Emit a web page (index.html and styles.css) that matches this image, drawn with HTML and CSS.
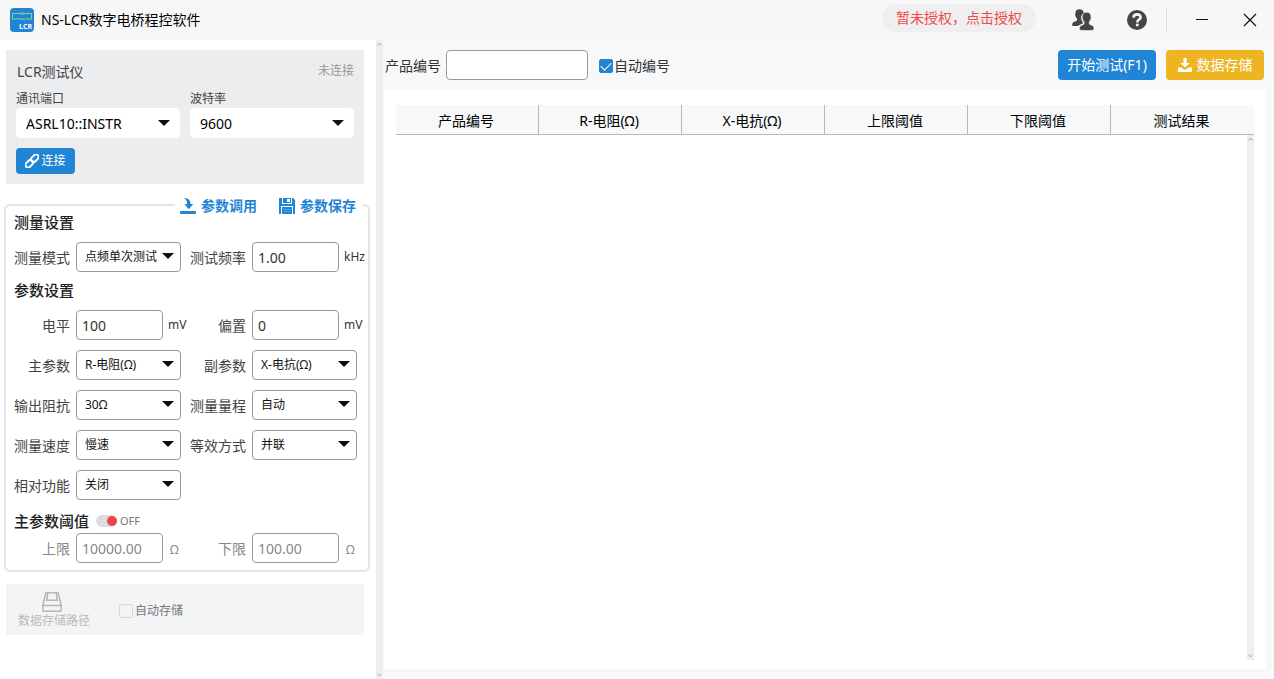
FILE: index.html
```html
<!DOCTYPE html>
<html lang="zh-CN">
<head>
<meta charset="utf-8">
<title>NS-LCR数字电桥程控软件</title>
<link rel="stylesheet" href="styles.css">
</head>
<body>
<header class="titlebar">
  <svg class="logo" viewBox="0 0 24 24" width="24" height="24" aria-hidden="true">
    <rect width="24" height="24" rx="4" fill="#1f85d4"/>
    <path d="M2.5 11.500V5.500H11M13 5.500h8.500v5.500h-2.500M11 4v3M13 4v3M2.500 11h4l1-1 1 1.500 1-1.500 1 1.500 1-1.500 1 1.500h2M15 11.500c.5-1.500 1.500-1.500 2 0 .5-1.500 1.500-1.500 2 0" fill="none" stroke="#8fcf82" stroke-width="1"/>
    <text x="9" y="20.500" class="logo-text">LCR</text>
  </svg>
  <h1 class="app-title">NS-LCR数字电桥程控软件</h1>
  <button class="license" type="button">暂未授权，点击授权</button>
  <div class="title-tools">
    <button class="icon-btn" type="button" aria-label="用户">
      <svg viewBox="0 0 22 22" width="22" height="22"><path fill="#454545" d="M7.500.2c3 0 4.300 1.600 4.300 4.300C9.500 5.500 8.800 7.500 9.300 10.200c.3 1.300.8 2.200 1.500 3v1.300c-2 .9-3.900 1.300-4.700 2.500H.3c-.3-3 .7-3.700 2.500-4.400 1.700-.6 2.300-.9 2.300-1.900v-.9C4 8.800 3.700 7.700 3.500 6.700c-.6-.6-.6-1.500-.1-2C3.200 2 4.400.2 7.500.2z"/><path fill="#454545" stroke="#f7f7f7" stroke-width=".6" d="M14.600 3.200c3.200 0 4.600 1.900 4.300 4.700.5.600.4 1.500-.2 2-.2 1.200-.7 2.300-1.500 3v1.500c.2 1 1 1.300 2.300 1.800 1.900.7 2.600 1.500 2.500 4.500-1.500.6-4 .9-7.300.9s-5.800-.3-7.400-.9c0-3 .7-3.800 2.500-4.500 1.400-.5 2.100-.8 2.300-1.800v-1.500c-.8-.7-1.300-1.800-1.500-3-.6-.5-.7-1.400-.2-2-.3-2.800 1.100-4.700 4.200-4.700z"/></svg>
    </button>
    <button class="icon-btn" type="button" aria-label="帮助">
      <svg viewBox="0 0 20 20" width="20" height="20"><circle cx="10" cy="10" r="10" fill="#454545"/><path d="M6.500 7.600C6.700 3.300 13.700 3.400 13.600 7.400c-.1 2.200-3.300 2.300-3.300 5" fill="none" stroke="#f7f7f7" stroke-width="2.600"/><rect x="8.900" y="13.700" width="2.700" height="2.600" fill="#f7f7f7"/></svg>
    </button>
  </div>
  <div class="window-tools">
    <button class="icon-btn" type="button" aria-label="最小化">
      <svg viewBox="0 0 14 14" width="14" height="14"><path d="M1 6.500h12" stroke="#111"/></svg>
    </button>
    <button class="icon-btn" type="button" aria-label="关闭窗口">
      <svg viewBox="0 0 14 14" width="14" height="14"><path d="M1 1l12 12M13 1L1 13" stroke="#111" stroke-width="1.200"/></svg>
    </button>
  </div>
</header>

<div class="workspace">
  <aside class="sidebar">
    <section class="device">
      <div class="device-head"><h2 class="device-name">LCR测试仪</h2><span class="status">未连接</span></div>
      <div class="device-ports">
        <div class="port">
          <label class="port-label" for="port">通讯端口</label>
          <span class="combo combo-flat"><select id="port"><option>ASRL10::INSTR</option></select></span>
        </div>
        <div class="port">
          <label class="port-label" for="baud">波特率</label>
          <span class="combo combo-flat"><select id="baud"><option>9600</option></select></span>
        </div>
      </div>
      <button class="btn btn-connect" type="button">
        <svg viewBox="0 0 14 14" width="14" height="14"><g fill="none" stroke="#fff" stroke-width="2" transform="rotate(-45 7 7)"><rect x="-1.200" y="4.400" width="8.600" height="5.200" rx="2.600"/><rect x="6.600" y="4.400" width="8.600" height="5.200" rx="2.600"/></g></svg>
        连接
      </button>
    </section>

    <fieldset class="settings">
      <legend class="actions">
        <button class="link-btn" type="button">
          <svg viewBox="0 0 16 16" width="16" height="16"><path fill="#1f85d4" d="M4 0c4 0 6.500 2 6.500 6h2.700L8.800 11.300 4.500 6h2.600C7.100 3 6 1 4 0zM.8 13h14.400a.8.8 0 0 1 .8.800V15.200a.8.800 0 0 1-.8.800H.8a.8.800 0 0 1-.8-.8V13.800A.8.800 0 0 1 .8 13z"/></svg>
          参数调用
        </button>
        <button class="link-btn" type="button">
          <svg viewBox="0 0 16 16" width="16" height="16"><path fill="#1f85d4" d="M0 0h3v6h10V0h1l2 2v14h-2V8H2v8H0zM4 0h4v5H4zM11 0h1v5h-1zM8 0h3v1H8zM8 4h3v1H8zM3 9h10v7H3z"/><path d="M4.500 11.500h7M4.500 13.500h7" stroke="#4fa0df"/></svg>
          参数保存
        </button>
      </legend>

      <h3 class="group-title">测量设置</h3>
      <div class="fields">
        <label for="mode">测量模式</label>
        <span class="combo"><select id="mode"><option>点频单次测试</option></select></span>
        <label for="freq">测试频率</label>
        <span class="measure"><input class="text" id="freq" type="text" value="1.00"><span class="unit">kHz</span></span>
      </div>

      <h3 class="group-title group-gap">参数设置</h3>
      <div class="fields">
        <label for="level">电平</label>
        <span class="measure"><input class="text" id="level" type="text" value="100"><span class="unit">mV</span></span>
        <label for="bias">偏置</label>
        <span class="measure"><input class="text" id="bias" type="text" value="0"><span class="unit">mV</span></span>

        <label for="main">主参数</label>
        <span class="combo"><select id="main"><option>R-电阻(Ω)</option></select></span>
        <label for="second">副参数</label>
        <span class="combo"><select id="second"><option>X-电抗(Ω)</option></select></span>

        <label for="imp">输出阻抗</label>
        <span class="combo"><select id="imp"><option>30Ω</option></select></span>
        <label for="range">测量量程</label>
        <span class="combo"><select id="range"><option>自动</option></select></span>

        <label for="speed">测量速度</label>
        <span class="combo"><select id="speed"><option>慢速</option></select></span>
        <label for="equiv">等效方式</label>
        <span class="combo"><select id="equiv"><option>并联</option></select></span>

        <label for="rel">相对功能</label>
        <span class="combo"><select id="rel"><option>关闭</option></select></span>
      </div>

      <div class="threshold-head">
        <h3 class="group-title">主参数阈值</h3>
        <label class="toggle"><input type="checkbox" class="toggle-input" aria-label="主参数阈值">OFF</label>
      </div>
      <div class="fields fields-off">
        <label for="upper">上限</label>
        <span class="measure"><input class="text" id="upper" type="text" value="10000.00" disabled><span class="unit">Ω</span></span>
        <label for="lower">下限</label>
        <span class="measure"><input class="text" id="lower" type="text" value="100.00" disabled><span class="unit">Ω</span></span>
      </div>
    </fieldset>

    <section class="storage">
      <button class="path-btn" type="button" disabled>
        <svg viewBox="0 0 20 20" width="20" height="20"><path d="M4 .8h12l3.200 12.500v5a1 1 0 0 1-1 1H1.800a1 1 0 0 1-1-1v-5zM.8 13.500h18.400M5.800 1L4.800 8.300h10.400L14.200 1" fill="none" stroke="#b4b6b8" stroke-width="1.500"/></svg>
        数据存储路径
      </button>
      <label class="check check-off"><input type="checkbox" disabled>自动存储</label>
    </section>
  </aside>

  <div class="track track-side">
    <svg viewBox="0 0 5 4" width="5" height="4"><path d="M.5 3.500l2-2.500 2 2.500" fill="none" stroke="#aaa"/></svg>
    <svg viewBox="0 0 5 4" width="5" height="4"><path d="M.5 .5l2 2.500 2-2.500" fill="none" stroke="#aaa"/></svg>
  </div>

  <main class="main">
    <div class="toolbar">
      <label for="product">产品编号</label>
      <input class="text product" id="product" type="text">
      <label class="check"><input type="checkbox" checked>自动编号</label>
      <div class="toolbar-actions">
        <button class="btn btn-start" type="button">开始测试(F1)</button>
        <button class="btn btn-save" type="button">
          <svg viewBox="0 0 14 14" width="14" height="14"><path fill="#fff" d="M5.500 0h3v5h3L7 9.500 2.500 5h3zM.6 9.500h3L5.500 11.500h3l1.900-2h3a.6.600 0 0 1 .6.600v3.300a.6.600 0 0 1-.6.600H.6a.6.600 0 0 1-.6-.6v-3.300a.6.600 0 0 1 .6-.6z"/></svg>
          数据存储
        </button>
      </div>
    </div>
    <section class="results">
      <table class="grid">
        <thead>
          <tr><th>产品编号</th><th>R-电阻(Ω)</th><th>X-电抗(Ω)</th><th>上限阈值</th><th>下限阈值</th><th>测试结果</th></tr>
        </thead>
      </table>
      <div class="grid-body">
        <div class="track">
          <svg viewBox="0 0 5 4" width="5" height="4"><path d="M.5 3.500l2-2.500 2 2.500" fill="none" stroke="#aaa"/></svg>
          <svg viewBox="0 0 5 4" width="5" height="4"><path d="M.5 .5l2 2.500 2-2.500" fill="none" stroke="#aaa"/></svg>
        </div>
      </div>
    </section>
  </main>
</div>
</body>
</html>
```
FILE: styles.css
```css
:root {
  --blue: #1f85d4;
  --line: #999;
  --ink: #333;
}

* { box-sizing: border-box; }

body {
  margin: 0;
  min-height: 100vh;
  display: flex;
  flex-direction: column;
  background: #fff;
  color: var(--ink);
  font: 14px/20px "Noto Sans", "Noto Sans CJK SC", sans-serif;
}

button, input, select { font: inherit; color: inherit; }
button { border: 0; padding: 0; background: none; }
h1, h2, h3 { margin: 0; font-size: 14px; font-weight: 400; }
svg { display: block; flex: none; }

/* Title bar */
.titlebar {
  display: flex;
  align-items: center;
  height: 40px;
  padding: 0 17px 0 10px;
  background: #f7f7f7;
}
.logo-text { font: 700 7px "Open Sans", sans-serif; fill: #fff; }
.app-title { margin-left: 7px; color: #000; }
.license {
  height: 28px;
  margin: 0 36px 4px auto;
  padding: 0 14px;
  border-radius: 14px;
  background: #efefef;
  color: #ee4a4a;
}
.title-tools { display: flex; align-items: center; gap: 33px; padding-right: 19px; }
.icon-btn { display: block; }
.window-tools {
  display: flex;
  align-items: center;
  gap: 34px;
  height: 24px;
  padding-left: 28px;
  border-left: 1px solid #e0e0e0;
}

.workspace { flex: 1; display: flex; }

/* Sidebar */
.sidebar { flex: none; width: 376px; padding: 10px 6px 10px 4px; }
.device {
  margin: 0 6px 0 2px;
  padding: 12px 10px 10px;
  background: #ecedef;
}
.device-head { display: flex; justify-content: space-between; padding-left: 1px; margin-bottom: 6px; }
.device-name { color: #444; }
.status { font-size: 12px; line-height: 18px; color: #999; }
.device-ports { display: grid; grid-template-columns: 1fr 1fr; gap: 10px; margin-bottom: 10px; }
.port-label { display: block; padding-top: 2px; font-size: 12px; line-height: 18px; color: #444; }

.combo { position: relative; display: block; width: 105px; }
.combo select {
  display: block;
  width: 100%;
  height: 30px;
  padding: 0 8px;
  border: 1px solid var(--line);
  border-radius: 4px;
  appearance: none;
  background: #fff;
  color: #111;
  font-size: 12px;
}
.combo::after {
  content: "";
  position: absolute;
  right: 7px;
  top: 11px;
  border: 6px solid transparent;
  border-top-color: #111;
  border-bottom: 0;
  pointer-events: none;
}
.combo-flat { width: auto; }
.combo-flat select { padding: 1px 9px 0; border-color: #fff; color: #000; font-size: 14px; }
.combo-flat::after { right: 10px; top: 12px; }

.btn {
  display: flex;
  align-items: center;
  justify-content: center;
  border-radius: 4px;
  color: #fff;
}
.btn-connect { width: 59px; height: 26px; gap: 2px; background: var(--blue); font-size: 12px; }

.settings {
  margin: 11px 0 0;
  padding: 0 0 7px 8px;
  border: 2px solid #e3e3e3;
  border-radius: 6px;
  min-width: 0;
}
.actions { display: flex; gap: 22px; margin: 0 5px 0 auto; padding: 0 7px 0 5px; }
.link-btn { display: flex; align-items: center; gap: 5px; height: 20px; padding-top: 2px; color: var(--blue); font-weight: 700; }
.group-title { font-size: 15px; line-height: 14px; font-weight: 500; color: #222; }
.group-gap { margin-top: 11px; }
.fields {
  display: grid;
  grid-template-columns: 56px 108px 56px 1fr;
  column-gap: 6px;
  row-gap: 10px;
  align-items: center;
  margin-top: 13px;
}
.fields label { padding-top: 1px; text-align: right; white-space: nowrap; color: #444; }
.measure { display: flex; align-items: center; gap: 5px; }
.text {
  width: 87px;
  height: 30px;
  padding: 0 5px;
  border: 1px solid var(--line);
  border-radius: 4px;
  background: #fff;
}
.unit { font-size: 12px; }
.threshold-head { display: flex; align-items: center; gap: 7px; margin-top: 13px; }
.fields-off { margin-top: 4px; }
.fields-off label, .fields-off .text, .fields-off .unit { color: #888; }
.fields-off .unit { padding: 4px 0 0 2px; }
.toggle { display: flex; align-items: center; gap: 3px; font-size: 11px; line-height: 16px; color: #777; }
.toggle-input {
  display: flex;
  justify-content: flex-end;
  width: 21px;
  height: 12px;
  margin: 0;
  border-radius: 6px;
  appearance: none;
  background: #dcdddf;
}
.toggle-input::before { content: ""; width: 10px; height: 10px; margin: 1px 0; border-radius: 50%; background: #ec4646; }

.storage {
  display: flex;
  align-items: center;
  gap: 29px;
  height: 51px;
  margin: 12px 6px 0 2px;
  padding: 3px 12px 0;
  background: #f3f4f6;
}
.path-btn { display: flex; flex-direction: column; align-items: center; font-size: 12px; line-height: 18px; color: #bbb; }
.path-btn svg { margin-right: 4px; }
.check { display: flex; align-items: center; gap: 1px; }
.check input {
  display: grid;
  place-items: center;
  width: 14px;
  height: 14px;
  margin: 0;
  border: 1px solid #d6d7d9;
  border-radius: 2px;
  appearance: none;
}
.check input:checked { border-color: var(--blue); background: var(--blue); }
.check input:checked::before {
  content: "";
  width: 9px;
  height: 5px;
  margin-bottom: 2px;
  border: solid #fff;
  border-width: 0 0 1px 1px;
  transform: rotate(-45deg);
}
.check-off { gap: 2px; font-size: 12px; color: #777; }

/* Thin scroll tracks */
.track {
  display: flex;
  flex-direction: column;
  justify-content: space-between;
  align-items: center;
  flex: none;
  width: 7px;
  padding: 2px 0;
  background: #efefef;
}

/* Results area */
.main { flex: 1; min-width: 0; display: flex; flex-direction: column; padding: 0 8px 10px 1px; background: #f6f8fa; }
.toolbar { display: flex; align-items: center; height: 50px; padding: 0 2px 0 1px; }
.toolbar label { padding-top: 2px; }
.product { width: 142px; margin: 0 11px 0 5px; }
.toolbar-actions { display: flex; gap: 10px; margin-left: auto; }
.btn-start, .btn-save { width: 98px; height: 30px; }
.btn-start { background: var(--blue); }
.btn-save { gap: 5px; background: #eeb422; }
.results { flex: 1; display: flex; flex-direction: column; padding: 15px 12px 9px; background: #fff; }
.grid { width: 100%; table-layout: fixed; border-collapse: separate; border-spacing: 0; }
.grid th {
  height: 30px;
  padding: 2px 2px 0 0;
  border-right: 1px solid #b8b8b8;
  border-bottom: 1px solid #b8b8b8;
  background: #f6f8fa;
  color: #000;
  font-weight: 400;
}
.grid th:last-child { border-right: 0; }
.grid-body { flex: 1; display: flex; justify-content: flex-end; }
```
